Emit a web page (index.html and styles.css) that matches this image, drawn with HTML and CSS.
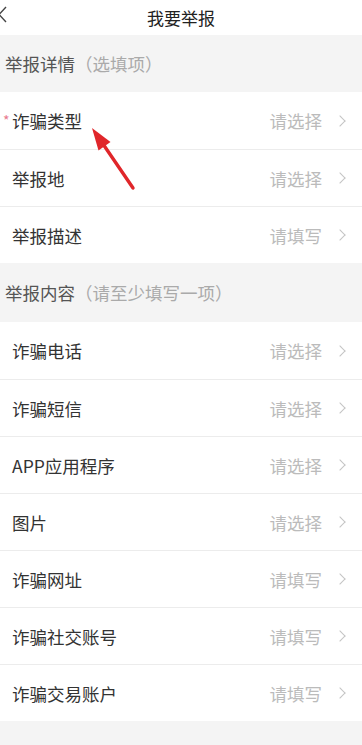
FILE: index.html
```html
<!DOCTYPE html>
<html lang="zh">
<head>
<meta charset="utf-8">
<link rel="stylesheet" href="styles.css">
</head>
<body>
<div class="page">
  <header class="topbar">
    <svg class="back" width="10" height="20" viewBox="0 0 10 20"><path d="M7 3 L0 10.5 L7 18" fill="none" stroke="#444" stroke-width="1.4"/></svg>
    <div class="title">我要举报</div>
  </header>

  <div class="section s1">举报详情<span class="hint"><span class="po">（</span>选填项<span class="pc">）</span></span></div>
  <div class="group">
    <div class="row"><span class="label"><span class="req">*</span>诈骗类型</span><span class="ph">请选择</span><span class="chev"></span></div>
    <div class="row"><span class="label">举报地</span><span class="ph">请选择</span><span class="chev"></span></div>
    <div class="row"><span class="label">举报描述</span><span class="ph">请填写</span><span class="chev"></span></div>
  </div>

  <div class="section s2">举报内容<span class="hint"><span class="po">（</span>请至少填写一项<span class="pc">）</span></span></div>
  <div class="group">
    <div class="row"><span class="label">诈骗电话</span><span class="ph">请选择</span><span class="chev"></span></div>
    <div class="row"><span class="label">诈骗短信</span><span class="ph">请选择</span><span class="chev"></span></div>
    <div class="row"><span class="label">APP应用程序</span><span class="ph">请选择</span><span class="chev"></span></div>
    <div class="row"><span class="label">图片</span><span class="ph">请选择</span><span class="chev"></span></div>
    <div class="row"><span class="label">诈骗网址</span><span class="ph">请填写</span><span class="chev"></span></div>
    <div class="row"><span class="label">诈骗社交账号</span><span class="ph">请填写</span><span class="chev"></span></div>
    <div class="row"><span class="label">诈骗交易账户</span><span class="ph">请填写</span><span class="chev"></span></div>
  </div>
  <div class="footer"></div>

  <svg class="arrow" width="60" height="75" viewBox="0 0 60 75">
    <line x1="45" y1="66" x2="15" y2="22" stroke="#e0262a" stroke-width="3.4" stroke-linecap="round"/>
    <polygon points="4,6 22.5,20 10.5,28.5" fill="#e0262a"/>
  </svg>
</div>
</body>
</html>
```
FILE: styles.css
```css
* { box-sizing: border-box; }
html, body { margin: 0; padding: 0; background: #fff; }
body {
  font-family: "Noto Sans CJK SC", "Noto Sans", sans-serif;
  color: #333;
}
.page {
  position: relative;
  width: 362px;
  min-height: 745px;
  background: #f4f4f4;
  overflow: hidden;
}
.topbar {
  position: relative;
  height: 35px;
  background: #fff;
  display: flex;
  align-items: center;
  justify-content: center;
}
.back {
  position: absolute;
  left: -1px;
  top: 4px;
}
.title {
  font-size: 17px;
  color: #222;
}
.section {
  display: flex;
  align-items: center;
  padding-left: 5px;
  font-size: 17.5px;
  color: #555;
  background: #f4f4f4;
}
.s1 { height: 57px; }
.s2 { height: 59px; }
.hint { color: #aaa; }
.po, .pc {
  display: inline-block;
  width: 1em;
}
.po { text-align: right; }
.pc { text-align: left; }
.group { background: #fff; }
.row {
  height: 57px;
  display: flex;
  align-items: center;
  padding-left: 12px;
  padding-right: 16px;
  border-top: 1px solid #ececec;
  position: relative;
}
.row:first-child { border-top: none; }
.label {
  flex: 1;
  font-size: 17.5px;
  color: #333;
}
.req {
  position: absolute;
  left: 3px;
  top: 18px;
  font-size: 14px;
  color: #e8798e;
}
.ph {
  font-size: 17.5px;
  color: #bbb;
  margin-right: 14px;
}
.chev {
  width: 8px;
  height: 8px;
  border-top: 1.2px solid #c4c4c4;
  border-right: 1.2px solid #c4c4c4;
  transform: rotate(45deg);
  margin-right: 2px;
}
.footer {
  height: 30px;
  background: #f4f4f4;
}
.arrow {
  position: absolute;
  left: 88px;
  top: 122px;
}
```
